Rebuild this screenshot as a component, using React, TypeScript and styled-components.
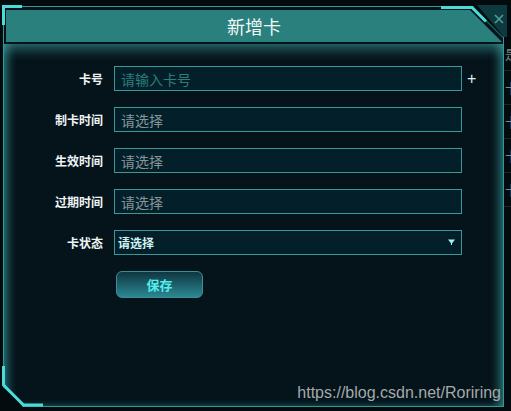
import styled, { createGlobalStyle } from "styled-components";

const GlobalStyle = createGlobalStyle`
  html, body {
    margin: 0;
    padding: 0;
    background: #030b0e;
    overflow: hidden;
  }
`;

const FONT = `"Noto Sans CJK SC", "Noto Sans", sans-serif`;

interface FieldDef {
  label: string;
  placeholder: string;
  tone: "teal" | "gray";
  plus?: boolean;
}

const fields: FieldDef[] = [
  { label: "卡号", placeholder: "请输入卡号", tone: "teal", plus: true },
  { label: "制卡时间", placeholder: "请选择", tone: "gray" },
  { label: "生效时间", placeholder: "请选择", tone: "gray" },
  { label: "过期时间", placeholder: "请选择", tone: "gray" },
];

const backdropRows = ["是", "卡", "卡", "卡", "卡"];

const App = () => {
  return (
    <Page>
      <GlobalStyle />
      <Backdrop>
        {backdropRows.map((t, i) => (
          <BackdropRow key={i}>{t}</BackdropRow>
        ))}
      </Backdrop>

      <Frame>
        <Dialog>
          <Header>新增卡</Header>
          <Body>
            <Form>
              {fields.map((f) => (
                <Row key={f.label}>
                  <Label>{f.label}</Label>
                  <Input placeholder={f.placeholder} $tone={f.tone} />
                  {f.plus && <Plus>+</Plus>}
                </Row>
              ))}
              <Row>
                <Label>卡状态</Label>
                <Select>
                  <span>请选择</span>
                  <svg width="7" height="7" viewBox="0 0 7 7">
                    <path d="M0 0.5 H7 L3.5 5 Z" fill="#a8f2f2" />
                    <rect x="3" y="4" width="1" height="2" fill="#a8f2f2" />
                  </svg>
                </Select>
              </Row>
              <Row $offset>
                <SaveButton>保存</SaveButton>
              </Row>
            </Form>
          </Body>
        </Dialog>

        <CornerArt viewBox="0 0 511 411" width="511" height="411">
          {/* top left bracket */}
          <polyline points="3.5,25 3.5,6.5 22,6.5" fill="none" stroke="#4cdcd8" strokeWidth="3" />
          {/* top right chamfer */}
          <line x1="472" y1="6.5" x2="503" y2="37.5" stroke="#1c5c5e" strokeWidth="1.5" />
          <polyline points="441,7.5 472,7.5 486,21.5" fill="none" stroke="#4cdcd8" strokeWidth="3" />
          {/* bottom left bracket */}
          <line x1="3" y1="386" x2="23" y2="406" stroke="#2f9a97" strokeWidth="1" />
          <polyline points="3.5,366 3.5,385 23.5,405 43,405" fill="none" stroke="#4cdcd8" strokeWidth="3" />
        </CornerArt>

        <CloseButton aria-label="关闭">
          <svg width="10" height="10" viewBox="0 0 10 10">
            <path d="M1 1 L9 9 M9 1 L1 9" stroke="#4f9c9c" strokeWidth="1.6" />
          </svg>
        </CloseButton>
      </Frame>

      <Watermark>https://blog.csdn.net/Roriring</Watermark>
    </Page>
  );
};

const Page = styled.div`
  position: relative;
  width: 511px;
  height: 411px;
  box-sizing: border-box;
  padding: 6px 0 0 3px;
  overflow: hidden;
  background: #030b0e;
  font-family: ${FONT};
`;

const Backdrop = styled.div`
  position: absolute;
  left: 504px;
  top: 37px;
  width: 7px;
  overflow: hidden;
`;

const BackdropRow = styled.div`
  height: 34px;
  box-sizing: border-box;
  border-bottom: 1px solid #1c2629;
  display: flex;
  align-items: center;
  padding-left: 1px;
  color: #7c8888;
  font-size: 13px;
  white-space: nowrap;
`;

const Frame = styled.div`
  position: relative;
  width: 501px;
  height: 401px;
`;

const Dialog = styled.div`
  height: 100%;
  box-sizing: border-box;
  border: 1px solid #2f9a97;
  background: #05131a;
  clip-path: polygon(0 0, calc(100% - 31px) 0, 100% 31px, 100% 100%, 20px 100%, 0 calc(100% - 20px));
  display: flex;
  flex-direction: column;
`;

const Header = styled.div`
  margin: 3px 1px 2px 2px;
  height: 32px;
  background: #29807c;
  clip-path: polygon(0 0, calc(100% - 32px) 0, 100% 100%, 0 100%);
  display: flex;
  align-items: center;
  justify-content: center;
  color: #f2f8f8;
  font-size: 18px;
  letter-spacing: 0;
`;

const Body = styled.div`
  flex: 1;
  box-shadow:
    inset 10px 0 10px -6px rgba(70, 190, 190, 0.55),
    inset -10px 0 10px -6px rgba(70, 190, 190, 0.55),
    inset 0 14px 12px -8px rgba(70, 175, 175, 0.5),
    inset 0 -6px 8px -6px rgba(70, 175, 175, 0.35);
`;

const Form = styled.div`
  display: flex;
  flex-direction: column;
  gap: 16px;
  padding-top: 22px;
`;

const Row = styled.div<{ $offset?: boolean }>`
  display: flex;
  align-items: center;
  padding-left: ${(p) => (p.$offset ? "112px" : "0")};
`;

const Label = styled.label`
  width: 99px;
  margin-right: 11px;
  text-align: right;
  color: #eef4f4;
  font-size: 12px;
  font-weight: 700;
`;

const Input = styled.input<{ $tone: "teal" | "gray" }>`
  width: 348px;
  height: 25px;
  box-sizing: border-box;
  border: 1px solid #3a9895;
  background: #03202a;
  padding: 0 6px;
  color: #d6f3f3;
  font-family: ${FONT};
  font-size: 14px;
  outline: none;

  &::placeholder {
    color: ${(p) => (p.$tone === "teal" ? "#2e7d79" : "#87959a")};
  }
`;

const Plus = styled.span`
  margin-left: 5px;
  color: #d8f4f4;
  font-family: "Liberation Sans", sans-serif;
  font-size: 16px;
  line-height: 1;
`;

const Select = styled.div`
  width: 348px;
  height: 25px;
  box-sizing: border-box;
  border: 1px solid #3a9895;
  background: #03202a;
  padding: 0 6px 0 3px;
  display: flex;
  align-items: center;
  justify-content: space-between;
  color: #d2f2f2;
  font-size: 12px;
  font-weight: 700;
`;

const SaveButton = styled.button`
  width: 87px;
  height: 27px;
  border: 1px solid #3b8e95;
  border-radius: 6px;
  background: linear-gradient(to bottom, #0f3640, #2b8893);
  color: #55ecec;
  font-family: ${FONT};
  font-size: 13px;
  font-weight: 700;
  cursor: pointer;
`;

const CornerArt = styled.svg`
  position: absolute;
  left: -3px;
  top: -6px;
  pointer-events: none;
`;

const CloseButton = styled.button`
  position: absolute;
  left: 474px;
  top: -1px;
  width: 30px;
  height: 32px;
  border: 0;
  padding: 0;
  background: #0d3a3e;
  clip-path: polygon(0 0, 100% 0, 100% 100%, 90% 100%);
  display: flex;
  align-items: flex-start;
  justify-content: flex-end;
  cursor: pointer;

  svg {
    margin: 9px 3px 0 0;
  }
`;

const Watermark = styled.div`
  position: absolute;
  right: 10px;
  bottom: 10px;
  color: #a3aaaa;
  font-family: "Liberation Sans", sans-serif;
  font-size: 16px;
  line-height: 16px;
  pointer-events: none;
`;

export default App;
